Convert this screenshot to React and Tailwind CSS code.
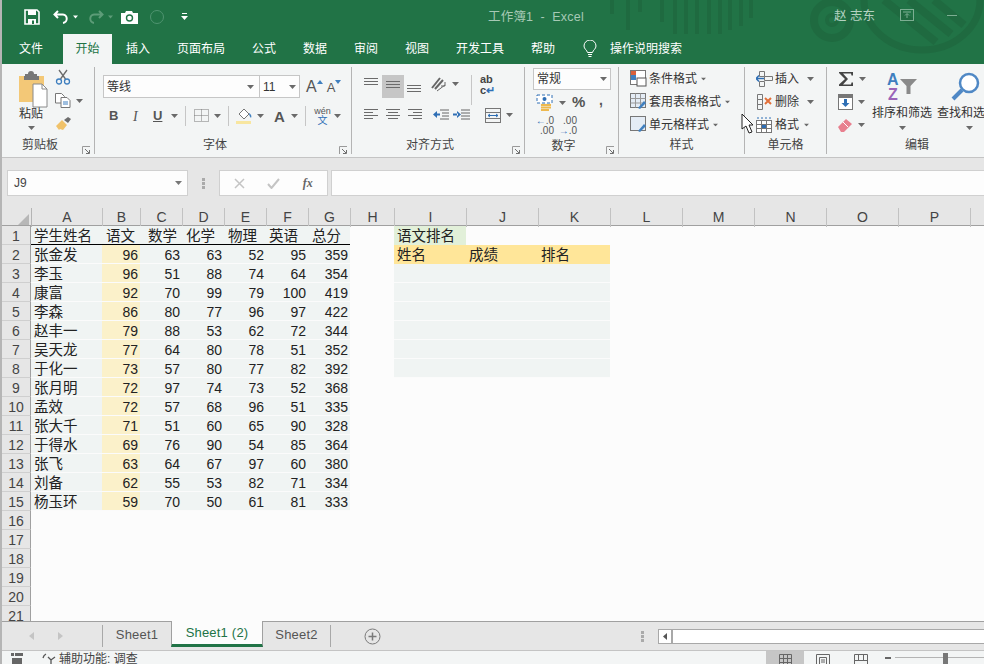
import React from "react";

const students = [
  ["张金发", 96, 63, 63, 52, 95, 359],
  ["李玉", 96, 51, 88, 74, 64, 354],
  ["康富", 92, 70, 99, 79, 100, 419],
  ["李森", 86, 80, 77, 96, 97, 422],
  ["赵丰一", 79, 88, 53, 62, 72, 344],
  ["吴天龙", 77, 64, 80, 78, 51, 352],
  ["于化一", 73, 57, 80, 77, 82, 392],
  ["张月明", 72, 97, 74, 73, 52, 368],
  ["孟效", 72, 57, 68, 96, 51, 335],
  ["张大千", 71, 51, 60, 65, 90, 328],
  ["于得水", 69, 76, 90, 54, 85, 364],
  ["张飞", 63, 64, 67, 97, 60, 380],
  ["刘备", 62, 55, 53, 82, 71, 334],
  ["杨玉环", 59, 70, 50, 61, 81, 333],
];

const columns = ["A", "B", "C", "D", "E", "F", "G", "H", "I", "J", "K", "L", "M", "N", "O", "P", "Q"];
const heading = ["学生姓名", "语文", "数学", "化学", "物理", "英语", "总分"];
const headingPad = ["pl-[3px]", "pl-[4px]", "pl-[8px]", "pl-[4px]", "pl-[4px]", "pl-[3px]", "pl-[4px]"];
const rowCols = "grid grid-cols-[29px_71px_38px_42px_42px_42px_42px_42px_44px_72px_72px_72px_72px_72px_72px_72px_72px_72px]";
const headCols = "grid grid-cols-[30px_71px_38px_42px_42px_42px_42px_42px_44px_72px_72px_72px_72px_72px_72px_72px_72px_72px]";

function Drop({ color = "#6a6a6a", className = "" }) {
  return (
    <svg width="7" height="4" viewBox="0 0 7 4" className={"shrink-0 " + className}>
      <path d="M0 0h7L3.500 4z" fill={color} />
    </svg>
  );
}

function Launcher() {
  return (
    <svg width="9" height="9" viewBox="0 0 9 9" className="absolute right-[3px] bottom-[-1px]">
      <path d="M.5 8V.5H8" fill="none" stroke="#9a9a9a" />
      <path d="M3 3l4 4M7.500 4v3.500H4" fill="none" stroke="#6f6f6f" />
    </svg>
  );
}

function Lines({ widths, gap = 4, color = "#6b6b6b" }) {
  return (
    <svg width="16" height="14" viewBox="0 0 16 14">
      {widths.map(([x, w], i) => (
        <rect key={i} x={x} y={i * gap + 1} width={w} height="1" fill={color} />
      ))}
    </svg>
  );
}

function QuickBar() {
  return (
    <div className="flex items-center h-[34px] pl-[22px]">
      <svg width="16" height="16" viewBox="0 0 16 16">
        <path d="M1 1h12l2 2v12H1z" fill="none" stroke="#fff" strokeWidth="1.600" />
        <rect x="4" y="1" width="8" height="5" fill="#fff" />
        <rect x="4" y="10" width="8" height="5" fill="#fff" />
        <rect x="8" y="11.500" width="2" height="3.500" fill="#217346" />
      </svg>
      <svg width="16" height="16" viewBox="0 0 16 16" className="ml-[13px]">
        <path d="M5 2L1.500 5.500 5 9M2 5.500h7a4.200 4.200 0 0 1 1 8.400" fill="none" stroke="#fff" strokeWidth="2" />
      </svg>
      <Drop color="#fff" className="ml-[4px] w-[5px]" />
      <svg width="16" height="16" viewBox="0 0 16 16" className="ml-[10px]">
        <path d="M11 2l3.500 3.500L11 9M14 5.500H7a4.200 4.200 0 0 0-1 8.400" fill="none" stroke="#5d9c78" strokeWidth="2" />
      </svg>
      <Drop color="#5d9c78" className="ml-[4px] w-[5px]" />
      <svg width="17" height="13" viewBox="0 0 17 13" className="ml-[8px]">
        <path d="M0 2h4l1-2h6l1 2h5v11H0z" fill="#fff" />
        <circle cx="8.500" cy="7" r="3" fill="none" stroke="#217346" strokeWidth="1.400" />
      </svg>
      <span className="ml-[12px] w-[14px] h-[14px] rounded-full border border-[#4f9470]" />
      <svg width="7" height="8" viewBox="0 0 7 8" className="ml-[17px]">
        <rect x="1" y="0" width="5" height="1" fill="#fff" />
        <path d="M0 3h7L3.500 7z" fill="#fff" />
      </svg>
    </div>
  );
}

function TitleArt() {
  return (
    <svg width="400" height="64" viewBox="0 0 400 64" className="absolute right-0 top-0" fill="none">
      <g stroke="#1f6a40" strokeWidth="4">
        <path d="M28 0v14M44 0v30M56 0v12M78 0v22M91 0v34M102 0v34M113 0v34M125 0v34M136 0v34M146 0v30M157 0v26M167 0v18" />
      </g>
      <circle cx="248" cy="20" r="18" stroke="#1f6a40" strokeWidth="8" />
      <circle cx="248" cy="20" r="5" stroke="#1f6a40" strokeWidth="4" />
      <path d="M280 0a58 50 0 0 0 116 0" stroke="#1f6a40" strokeWidth="7" />
      <path d="M300 0l52 42M325 0l42 34M350 0l30 25" stroke="#1f6a40" strokeWidth="8" />
    </svg>
  );
}

function Tabs() {
  const items = [
    ["文件", "w-[61px] pr-[3px]"],
    ["开始", "w-[49px]", true],
    ["插入", "w-[52px]"],
    ["页面布局", "w-[74px]"],
    ["公式", "w-[52px]"],
    ["数据", "w-[50px]"],
    ["审阅", "w-[52px]"],
    ["视图", "w-[50px]"],
    ["开发工具", "w-[76px]"],
    ["帮助", "w-[50px]"],
  ];
  return (
    <div className="flex items-stretch h-[30px] text-[12px]">
      {items.map(([label, w, active]) => (
        <div
          key={label}
          className={
            w +
            " flex items-center justify-center " +
            (active ? "bg-[#f3f5f5] text-[#217346]" : "text-white")
          }
        >
          {label}
        </div>
      ))}
      <div className="flex items-center text-white ml-[15px]">
        <svg width="14" height="18" viewBox="0 0 14 18" fill="none" stroke="#fff">
          <path d="M4.500 12.500C4 10 1 9 1 6a6 6 0 0 1 12 0c0 3-3 4-3.500 6.500zM5 14.500h4M5.500 16.500h3" />
        </svg>
        <span className="ml-[13px]">操作说明搜索</span>
      </div>
    </div>
  );
}

function TitleBar() {
  return (
    <div className="relative h-[64px] bg-[#217346] shrink-0">
      <TitleArt />
      <div className="absolute left-[486px] top-[8px] text-[12.500px] text-[#a6c9b5] tracking-[0.2px]">工作簿1&nbsp;&nbsp;-&nbsp;&nbsp;Excel</div>
      <div className="absolute left-[832px] top-[7px] text-[12.500px] text-[#b5d2c1]">赵 志东</div>
      <svg width="14" height="12" viewBox="0 0 14 12" className="absolute left-[898px] top-[9px]" fill="none" stroke="#7cae92">
        <rect x=".5" y=".5" width="13" height="11" />
        <path d="M3 3h8M7 9V5M5 6.500L7 4.500l2 2" />
      </svg>
      <div className="absolute left-[945px] top-[15px] w-[10px] h-px bg-[#7cae92]" />
      <div className="relative">
        <QuickBar />
        <Tabs />
      </div>
    </div>
  );
}

function Group({ width, label, launcher, children }) {
  return (
    <div className={width + " relative flex flex-col h-[87px] border-r border-[#b4b4b4] shrink-0"}>
      <div className="h-[72px] flex">{children}</div>
      <div className={"flex-1 flex items-center justify-center text-[12px] text-[#444] " + (launcher ? "pr-[16px]" : "")}>{label}</div>
      {launcher && <Launcher />}
    </div>
  );
}

function ClipboardGroup() {
  return (
    <Group width="w-[93px]" label="剪贴板" launcher>
      <div className="w-[52px] pl-[17px] pt-[4px] flex flex-col items-start">
        <svg width="30" height="38" viewBox="0 0 30 38">
          <rect x="0" y="5" width="25" height="26" fill="#f3c877" />
          <path d="M6 5V3h3a3 3 0 0 1 6 0h3v2h2v4H5V5z" fill="#777" />
          <path d="M14 13h9l5 5v18H14z" fill="#fff" stroke="#8a8a8a" />
          <path d="M23 13v5h5" fill="none" stroke="#8a8a8a" />
        </svg>
        <span className="text-[12px] text-[#333] -mt-[3px] leading-[16px]">粘贴</span>
        <Drop className="ml-[9px] mt-[4px]" />
      </div>
      <div className="flex flex-col pt-[2px] pl-[1px]">
        <svg width="16" height="16" viewBox="0 0 16 16" fill="none">
          <path d="M4 1l6.500 9M12 1L5.500 10" stroke="#6b6b6b" strokeWidth="1.300" />
          <circle cx="4" cy="12.500" r="2.500" stroke="#3f7fbf" strokeWidth="1.300" />
          <circle cx="12" cy="12.500" r="2.500" stroke="#3f7fbf" strokeWidth="1.300" />
        </svg>
        <div className="flex items-center mt-[8px]">
          <svg width="16" height="15" viewBox="0 0 16 15" fill="#fff" stroke="#777">
            <path d="M.5.500h6l3 3V10H.5z" />
            <path d="M6 4.500h6l3 3v7H6z" />
            <path d="M8 9h5M8 11h5" stroke="#3f7fbf" />
          </svg>
          <Drop className="ml-[5px]" />
        </div>
        <svg width="17" height="15" viewBox="0 0 17 15" className="mt-[8px]">
          <path d="M1 10l6-6 5 5-4 5-3-1-1 1z" fill="#f0c26a" />
          <path d="M9 4l4-3 3 2-3 4z" fill="#6d6d6d" />
        </svg>
      </div>
    </Group>
  );
}

function FontGroup() {
  return (
    <Group width="w-[257px]" label="字体" launcher>
      <div className="pl-[8px] pt-[8px] flex flex-col">
        <div className="flex items-center">
          <div className="w-[157px] h-[23px] bg-[#fdfdfd] border border-[#c6c6c6] flex items-center justify-between pl-[3px] pr-[5px] text-[12px] text-[#333]">
            等线
            <Drop />
          </div>
          <div className="w-[40px] h-[23px] bg-[#fdfdfd] border border-[#c6c6c6] border-l-0 flex items-center justify-between pl-[3px] pr-[3px] text-[12px] text-[#333]">
            11
            <Drop />
          </div>
          <span className="ml-[6px] text-[16px] text-[#555] leading-none">A</span>
          <svg width="6" height="4" viewBox="0 0 6 4" className="mb-[10px]"><path d="M0 4h6L3 0z" fill="#3f7fbf" /></svg>
          <span className="ml-[4px] text-[13px] text-[#555] leading-none mt-[2px]">A</span>
          <svg width="6" height="4" viewBox="0 0 6 4" className="mb-[10px]"><path d="M0 0h6L3 4z" fill="#3f7fbf" /></svg>
        </div>
        <div className="flex items-center h-[22px] mt-[7px] text-[#555] font-bold text-[13px]">
          <span className="ml-[6px] w-[18px]">B</span>
          <span className="ml-[6px] w-[20px] italic font-normal [font-family:'Liberation_Serif',serif] text-[14px]">I</span>
          <span className="w-[16px] underline">U</span>
          <Drop className="ml-[2px]" />
          <span className="ml-[7px] h-[20px] w-px bg-[#c6c6c6]" />
          <svg width="16" height="14" viewBox="0 0 16 14" className="ml-[8px]" fill="none" stroke="#777" strokeDasharray="1 1">
            <path d="M.5.500h14v12H.5zM7.500.500v12M.5 6.500h14" />
          </svg>
          <Drop className="ml-[4px]" />
          <span className="ml-[7px] h-[20px] w-px bg-[#c6c6c6]" />
          <svg width="17" height="17" viewBox="0 0 17 17" className="ml-[7px]">
            <path d="M3 6l5-5 5 5-5 5z" fill="#fff" stroke="#777" />
            <path d="M13 5c2 1 3 3 2 5-1-1-2-3-2-5z" fill="#3f7fbf" />
            <rect x="0" y="13" width="15" height="3" fill="#f8e6a0" />
          </svg>
          <Drop className="ml-[4px]" />
          <span className="ml-[10px] w-[12px] text-[15px] leading-none">A</span>
          <Drop className="ml-[5px]" />
          <span className="ml-[7px] h-[20px] w-px bg-[#c6c6c6]" />
          <div className="ml-[8px] w-[17px] flex flex-col items-center leading-[10px] font-normal">
            <span className="text-[9px]">wén</span>
            <span className="text-[10px] text-[#2f6fb5]">文</span>
          </div>
          <Drop className="ml-[3px]" />
        </div>
      </div>
    </Group>
  );
}

function AlignGroup() {
  return (
    <Group width="w-[173px]" label="对齐方式" launcher>
      <div className="pl-[8px] flex flex-col">
        <div className="flex items-start h-[31px] pt-[8px]">
          <div className="w-[22px] h-[23px] flex justify-center pt-[2px]"><Lines widths={[[1, 14], [1, 14], [1, 14]]} gap={3} /></div>
          <div className="w-[22px] h-[23px] flex justify-center items-center bg-[#c6c6c6]"><Lines widths={[[1, 14], [1, 14], [1, 14]]} gap={3} /></div>
          <div className="w-[20px] h-[23px] flex justify-center items-end"><Lines widths={[[1, 14], [1, 14], [1, 14]]} gap={3} /></div>
          <svg width="18" height="16" viewBox="0 0 18 16" className="ml-[6px] mt-[1px]" fill="none" stroke="#666">
            <path d="M2 12L10 2M5 13l8-9" strokeWidth="2" />
            <path d="M7 15l8-6" />
            <path d="M15 6v4h-4" />
          </svg>
          <Drop className="ml-[4px] mt-[7px]" />
          <span className="ml-[12px] w-px h-[30px] bg-[#c6c6c6]" />
          <div className="ml-[8px] w-[22px] text-[11px] leading-[11px] text-[#444] font-bold -mt-[1px]">
            ab
            <br />c<span className="text-[#2f6fb5]">↵</span>
          </div>
        </div>
        <div className="flex items-center h-[22px] mt-[6px]">
          <div className="w-[22px] flex justify-center"><Lines widths={[[1, 14], [1, 9], [1, 14], [1, 9]]} gap={3} /></div>
          <div className="w-[22px] flex justify-center"><Lines widths={[[1, 14], [3, 10], [1, 14], [3, 10]]} gap={3} /></div>
          <div className="w-[22px] flex justify-center"><Lines widths={[[1, 14], [6, 9], [1, 14], [6, 9]]} gap={3} /></div>
          <svg width="18" height="14" viewBox="0 0 18 14" className="ml-[6px]">
            <path d="M8 2h9M10 5h7M10 8h7M8 11h9" stroke="#666" />
            <path d="M1 6.500L5 3v7zM4 5.500h4v2H4z" fill="#2f6fb5" />
          </svg>
          <svg width="18" height="14" viewBox="0 0 18 14" className="ml-[3px]">
            <path d="M8 2h9M8 5h9M8 8h9M8 11h9" stroke="#666" />
            <path d="M8 6.500L4 3v7zM0 5.500h5v2H0z" fill="#2f6fb5" />
          </svg>
          <svg width="16" height="15" viewBox="0 0 16 15" className="ml-[14px]" fill="none">
            <rect x=".5" y=".5" width="15" height="14" stroke="#777" />
            <path d="M.5 4.500h15M.5 10.500h15" stroke="#777" />
            <path d="M3 7.500h10M3 7.500l2-1.500M3 7.500l2 1.500M13 7.500l-2-1.500M13 7.500l-2 1.500" stroke="#2f6fb5" />
          </svg>
          <Drop className="ml-[5px]" />
        </div>
      </div>
    </Group>
  );
}

function NumberGroup() {
  return (
    <Group width="w-[94px]" label="数字" launcher>
      <div className="pl-[8px] flex flex-col pt-[1px]">
        <div className="w-[78px] h-[22px] bg-[#fdfdfd] border border-[#c6c6c6] flex items-center justify-between px-[3px] text-[12px] text-[#333]">
          常规
          <Drop />
        </div>
        <div className="flex items-center h-[23px] mt-[1px]">
          <svg width="17" height="18" viewBox="0 0 17 18" className="ml-[3px]">
            <rect x="1" y="1" width="15" height="8" fill="#fff" stroke="#2f6fb5" strokeDasharray="3 2" />
            <circle cx="8.500" cy="5" r="2" fill="#2f6fb5" />
            <path d="M5 11h10M5 13.500h10M5 16h8" stroke="#eeb94f" strokeWidth="2" />
          </svg>
          <Drop className="ml-[6px]" />
          <span className="ml-[6px] w-[21px] text-[15px] text-[#555] font-bold">%</span>
          <span className="ml-[6px] text-[14px] text-[#555] font-bold leading-none mb-[6px]">,</span>
        </div>
        <div className="flex items-center h-[23px] text-[10px] leading-[10px] text-[#555]">
          <div className="ml-[2px] w-[19px] text-right">
            <span className="text-[#2f6fb5]">←</span>.0
            <br />.00
          </div>
          <div className="ml-[4px] w-[19px] text-right">
            .00
            <br />
            <span className="text-[#2f6fb5]">→</span>.0
          </div>
        </div>
      </div>
    </Group>
  );
}

function StyleIcon({ kind }) {
  return (
    <svg width="17" height="17" viewBox="0 0 17 17" className="shrink-0">
      <rect x=".5" y=".5" width="15" height="14" fill={kind === 0 ? "#fff" : "#e4ecf5"} stroke="#777" />
      {kind === 0 && <path d="M1 1h5v4H1z" fill="#d9603b" />}
      {kind === 0 && <path d="M1 5h5v5H1z" fill="#3f7fbf" />}
      {kind === 1 && <path d="M.5 5.500h15M.5 10h15M5.500.500v14M10.500.500v14" stroke="#999" fill="none" />}
      {kind !== 0 && <path d="M8 15l6-7 2 2-6 6z" fill="#3f7fbf" />}
      {kind === 0 && <rect x="7" y="8" width="9" height="8" fill="#fff" stroke="#555" />}
    </svg>
  );
}

function StylesGroup() {
  const items = ["条件格式", "套用表格格式", "单元格样式"];
  return (
    <Group width="w-[126px]" label="样式">
      <div className="pl-[11px] flex flex-col">
        {items.map((t, i) => (
          <div key={t} className="flex items-center h-[23px] text-[12px] text-[#333]">
            <StyleIcon kind={i} />
            <span className="ml-[2px]">{t}</span>
            <Drop className="ml-[3px] scale-75" />
          </div>
        ))}
      </div>
    </Group>
  );
}

function CellsGroup() {
  return (
    <Group width="w-[82px]" label="单元格">
      <div className="pl-[11px] flex flex-col text-[12px] text-[#333]">
        <div className="flex items-center h-[23px]">
          <svg width="17" height="16" viewBox="0 0 17 16" fill="none" stroke="#777" className="shrink-0">
            <path d="M3.500.500h5v5h-5zM8.500 5.500h8v4h-8zM3.500 10.500h5v5h-5z" />
            <path d="M0 7.500h8M3 4.500L0 7.500l3 3" stroke="#2f6fb5" strokeWidth="1.500" />
          </svg>
          <span className="ml-[2px] w-[32px]">插入</span>
          <Drop />
        </div>
        <div className="flex items-center h-[23px]">
          <svg width="17" height="16" viewBox="0 0 17 16" fill="none" stroke="#777" className="shrink-0">
            <path d="M1.500.500h5v5h-5zM1.500 10.500h5v5h-5zM1.500 5.500h5v5h-5z" />
            <path d="M9 4l6 6M15 4l-6 6" stroke="#e2703a" strokeWidth="2" />
          </svg>
          <span className="ml-[2px] w-[32px]">删除</span>
          <Drop />
        </div>
        <div className="flex items-center h-[23px]">
          <svg width="17" height="16" viewBox="0 0 17 16" fill="none" stroke="#777" className="shrink-0">
            <rect x=".5" y="3.500" width="15" height="12" fill="#fff" />
            <path d="M.5 7.500h15M.5 11.500h15M5.500 3.500v12M10.500 3.500v12" />
            <rect x="6" y="8" width="4" height="3" fill="#2f6fb5" stroke="none" />
            <path d="M1 1h14" stroke="#2f6fb5" strokeDasharray="2 2" />
          </svg>
          <span className="ml-[2px] w-[28px]">格式</span>
          <Drop className="scale-75" />
        </div>
      </div>
    </Group>
  );
}

function EditGroup() {
  return (
    <div className="relative flex flex-col h-[87px] flex-1 min-w-0">
      <div className="h-[72px] flex">
        <div className="pl-[11px] flex flex-col w-[43px] shrink-0">
          <div className="flex items-center h-[23px]">
            <svg width="16" height="16" viewBox="0 0 16 16"><path d="M1 1h14v3.500h-1.500L13 2.500H5l5 5.500-5 5.500h8l.5-2H15V15H1v-1.500L7 8 1 2z" fill="#444" /></svg>
            <Drop className="ml-[5px]" />
          </div>
          <div className="flex items-center h-[23px]">
            <svg width="15" height="16" viewBox="0 0 15 16">
              <rect x=".5" y=".5" width="14" height="15" fill="#fff" stroke="#777" />
              <rect x="1" y="1" width="13" height="3" fill="#777" />
              <path d="M6 5h3v4h2.500l-4 4-4-4H6z" fill="#2f6fb5" />
            </svg>
            <Drop className="ml-[5px]" />
          </div>
          <div className="flex items-center h-[23px]">
            <svg width="15" height="14" viewBox="0 0 15 14">
              <path d="M0 9l8-8 6 5-8 8H3z" fill="#e8808f" />
              <path d="M5 4l5 5" stroke="#fff" />
            </svg>
            <Drop className="ml-[5px]" />
          </div>
        </div>
        <div className="w-[64px] flex flex-col items-center shrink-0 pt-[4px]">
          <svg width="32" height="30" viewBox="0 0 32 30" className="ml-[2px]">
            <text x="0" y="14" fontSize="16" fontWeight="700" fill="#3f7fbf" fontFamily="Liberation Sans">A</text>
            <text x="1" y="29" fontSize="16" fontWeight="700" fill="#9a64b8" fontFamily="Liberation Sans">Z</text>
            <path d="M13 8h17l-6.500 7v8h-4v-8z" fill="#8a8a8a" />
          </svg>
          <span className="text-[12px] text-[#333] mt-[4px] whitespace-nowrap leading-[16px]">排序和筛选</span>
          <Drop className="mt-[5px]" />
        </div>
        <div className="ml-[3px] w-[47px] shrink-0 flex flex-col items-start pt-[4px] overflow-hidden">
          <svg width="33" height="30" viewBox="0 0 33 30" fill="none" className="shrink-0 ml-[14px]">
            <circle cx="18" cy="12" r="9" stroke="#4f88c5" strokeWidth="2.500" fill="#fff" />
            <path d="M11 19L2 28" stroke="#4f88c5" strokeWidth="4" />
          </svg>
          <span className="text-[12px] text-[#333] mt-[4px] whitespace-nowrap leading-[16px]">查找和选</span>
          <Drop className="mt-[5px] ml-[29px]" />
        </div>
      </div>
      <div className="flex-1 flex items-center pl-[78px] text-[12px] text-[#444]">编辑</div>
    </div>
  );
}

function Ribbon() {
  return (
    <div className="relative flex h-[94px] shrink-0 pt-[3px] bg-[#f3f5f5] border-b border-[#c4c4c4]">
      <ClipboardGroup />
      <FontGroup />
      <AlignGroup />
      <NumberGroup />
      <StylesGroup />
      <CellsGroup />
      <EditGroup />
      {/* mouse pointer */}
      <svg width="13" height="21" viewBox="0 0 13 21" className="absolute left-[739px] top-[49px]">
        <path d="M1 1v15l4-3 3 7 3-1-3-7h4z" fill="#fff" stroke="#222" />
      </svg>
    </div>
  );
}

function FormulaBar() {
  return (
    <div className="flex items-start h-[50px] shrink-0 bg-[#e6e6e6] pt-[12px] pl-[5px]">
      <div className="w-[181px] h-[26px] bg-[#fdfdfd] border border-[#d0d0d0] flex items-center justify-between pl-[6px] pr-[5px] text-[12px] text-[#444]">
        J9
        <Drop color="#777" />
      </div>
      <div className="w-[31px] h-[26px] flex items-center justify-center">
        <svg width="3" height="11" viewBox="0 0 3 11" fill="#aaa"><rect width="3" height="3" /><rect y="4" width="3" height="3" /><rect y="8" width="3" height="3" /></svg>
      </div>
      <div className="w-[109px] h-[26px] bg-[#fdfdfd] border border-[#d0d0d0] flex items-center justify-around px-[3px] text-[#bbb]">
        <svg width="11" height="11" viewBox="0 0 11 11" fill="none" stroke="#c4c4c4" strokeWidth="1.500"><path d="M1 1l9 9M10 1l-9 9" /></svg>
        <svg width="13" height="11" viewBox="0 0 13 11" fill="none" stroke="#c4c4c4" strokeWidth="2"><path d="M1 6l3.500 4L12 1" /></svg>
        <span className="italic font-bold text-[12px] text-[#666] [font-family:'Liberation_Serif',serif]">fx</span>
      </div>
      <div className="ml-[3px] flex-1 h-[26px] bg-[#fdfdfd] border border-[#d0d0d0] border-r-0" />
    </div>
  );
}

function Sheet() {
  const rowCount = 21;
  return (
    <div className="flex-1 min-h-0 overflow-hidden bg-[#fcfcfc] text-[14px] text-[#222]">
      <div className={headCols + " h-[18px] bg-[#e6e6e6] border-b border-[#a0a0a0]"}>
        <div className="relative border-r border-[#b4b4b4]">
          <svg width="11" height="11" viewBox="0 0 11 11" className="absolute right-[2px] bottom-[2px]"><path d="M11 0v11H0z" fill="#b7b7b7" /></svg>
        </div>
        {columns.map((c) => (
          <div key={c} className="border-r border-[#c2c2c2] text-center leading-[19px] text-[14px] text-[#444]">{c}</div>
        ))}
      </div>
      <div className={rowCols + " auto-rows-[19px]"}>
        {Array.from({ length: rowCount }, (_, r) => (
          <React.Fragment key={r}>
            <div className="bg-[#e6e6e6] border-r border-[#a0a0a0] border-b border-b-[#cfcfcf] text-center leading-[20px] text-[#444]">{r + 1}</div>
            {columns.map((c, i) => {
              if (r === 0 && i < 7) {
                return (
                  <div key={c} className={headingPad[i] + " bg-[#f0f4f3] border-b border-black leading-[20px] text-[14.500px] whitespace-nowrap"}>
                    {heading[i]}
                  </div>
                );
              }
              if (r > 0 && r < 15 && i < 7) {
                const v = students[r - 1][i];
                if (i === 0) {
                  return <div key={c} className="pl-[3px] bg-[#f0f4f3] border-b border-[#fbfbfb] leading-[20px] text-[14.500px]">{v}</div>;
                }
                return (
                  <div key={c} className={(i === 1 ? "bg-[#fbf1ca]" : "bg-[#f0f4f3]") + " pr-[2px] text-right border-b border-[#fbfbfb] leading-[20px]"}>
                    {v}
                  </div>
                );
              }
              if (r === 0 && c === "I") {
                return <div key={c} className="pl-[3px] bg-[#e2f0d9] leading-[21px] text-[14.500px] whitespace-nowrap">语文排名</div>;
              }
              if (r === 1 && c === "I") return <div key={c} className="pl-[3px] bg-[#ffe699] leading-[21px] text-[14.500px]">姓名</div>;
              if (r === 1 && c === "J") return <div key={c} className="pl-[3px] bg-[#ffe699] leading-[21px] text-[14.500px]">成绩</div>;
              if (r === 1 && c === "K") return <div key={c} className="pl-[3px] bg-[#ffe699] leading-[21px] text-[14.500px]">排名</div>;
              if (r >= 2 && r <= 7 && (c === "I" || c === "J" || c === "K")) {
                return <div key={c} className="bg-[#f0f4f3] border-b border-[#fbfbfb]" />;
              }
              return <div key={c} />;
            })}
          </React.Fragment>
        ))}
      </div>
    </div>
  );
}

function SheetTabs() {
  return (
    <div className="flex items-stretch h-[29px] shrink-0 bg-[#e6e6e6] border-t border-[#a0a0a0] text-[13px] text-[#555]">
      <div className="w-[100px] flex items-center pl-[27px] border-r-0">
        <svg width="5" height="8" viewBox="0 0 5 8"><path d="M5 0v8L0 4z" fill="#c4c4c4" /></svg>
        <svg width="5" height="8" viewBox="0 0 5 8" className="ml-[24px]"><path d="M0 0v8l5-4z" fill="#c4c4c4" /></svg>
      </div>
      <div className="my-[3px] w-px bg-[#a8a8a8]" />
      <div className="w-[68px] flex items-center justify-center pb-[2px] tracking-[0.2px]">Sheet1</div>
      <div className="w-[92px] flex items-center justify-center bg-[#fcfcfc] text-[#217346] border-x border-[#a0a0a0] border-b-[3px] border-b-[#217346] -mt-px mb-[3px] tracking-[0.2px]">Sheet1 (2)</div>
      <div className="w-[67px] flex items-center justify-center pb-[2px] tracking-[0.2px]">Sheet2</div>
      <div className="my-[3px] w-px bg-[#a8a8a8]" />
      <div className="w-[83px] flex items-center justify-center">
        <svg width="17" height="17" viewBox="0 0 17 17" fill="none" stroke="#7a7a7a">
          <circle cx="8.500" cy="8.500" r="7.500" />
          <path d="M8.500 4.500v8M4.500 8.500h8" strokeWidth="1.500" />
        </svg>
      </div>
      <div className="w-[244px] flex items-center justify-end pr-[14px]">
        <svg width="3" height="11" viewBox="0 0 3 11" fill="#aaa"><rect width="3" height="3" /><rect y="4" width="3" height="3" /><rect y="8" width="3" height="3" /></svg>
      </div>
      <div className="flex-1 flex items-start pt-[7px]">
        <div className="w-[15px] h-[15px] bg-white border border-[#a8a8a8] border-r-2 flex items-center justify-center">
          <svg width="4" height="7" viewBox="0 0 4 7"><path d="M4 0v7L0 3.500z" fill="#555" /></svg>
        </div>
        <div className="flex-1 h-[15px] bg-white border-y border-[#a8a8a8]" />
      </div>
    </div>
  );
}

function StatusBar() {
  return (
    <div className="flex items-stretch h-[14px] shrink-0 overflow-hidden bg-[#f3f5f5] border-t border-[#c4c4c4] text-[12px] text-[#444]">
      <svg width="12" height="12" viewBox="0 0 12 12" className="ml-[9px] mt-[2px] shrink-0" fill="#666">
        <rect x="0" y="0" width="3" height="3" />
        <rect x="4" y="0" width="8" height="3" />
        <rect x="1" y="5" width="10" height="8" />
      </svg>
      <svg width="14" height="12" viewBox="0 0 14 12" className="ml-[19px] mt-[2px] shrink-0" fill="none" stroke="#555" strokeWidth="1.300">
        <path d="M1 5a6 6 0 0 1 3-4M6 4l3 3 4-3M9 7v5" />
      </svg>
      <span className="ml-[3px] w-[80px] shrink-0 leading-[16px]">辅助功能: 调查</span>
      <div className="ml-[627px] w-[38px] shrink-0 bg-[#c6c6c6] flex justify-center pt-[3px]">
        <svg width="13" height="12" viewBox="0 0 13 12" fill="none" stroke="#666"><path d="M.5.500h12v12H.5zM4.500.500v12M8.500.500v12M.5 4.500h12M.5 8.500h12" /></svg>
      </div>
      <div className="w-[38px] shrink-0 flex justify-center pt-[3px]">
        <svg width="14" height="12" viewBox="0 0 14 12" fill="none" stroke="#666"><path d="M.5.500h13v12H.5zM3.500 3.500h7v9h-7zM5 6h4M5 8h4" /></svg>
      </div>
      <div className="w-[38px] shrink-0 flex justify-center pt-[3px]">
        <svg width="14" height="12" viewBox="0 0 14 12" fill="none" stroke="#666"><path d="M.5.500h13v12H.5zM.5 6.500h13M4.500.500v6M9.500.500v6" /></svg>
      </div>
      <div className="relative flex-1 flex items-center pl-[5px]">
        <span className="w-[6px] h-[2px] bg-[#666]" />
        <span className="ml-[4px] flex-1 h-px bg-[#b4b4b4]" />
        <span className="absolute left-[63px] top-[2px] w-[5px] h-[12px] bg-[#777]" />
      </div>
    </div>
  );
}

export default function App() {
  return (
    <div className="w-[984px] h-[664px] overflow-hidden flex flex-col border-l-2 border-[#b5b5b5] bg-white [font-family:'Liberation_Sans','Noto_Sans_CJK_SC',sans-serif]">
      <TitleBar />
      <Ribbon />
      <FormulaBar />
      <Sheet />
      <SheetTabs />
      <StatusBar />
    </div>
  );
}
